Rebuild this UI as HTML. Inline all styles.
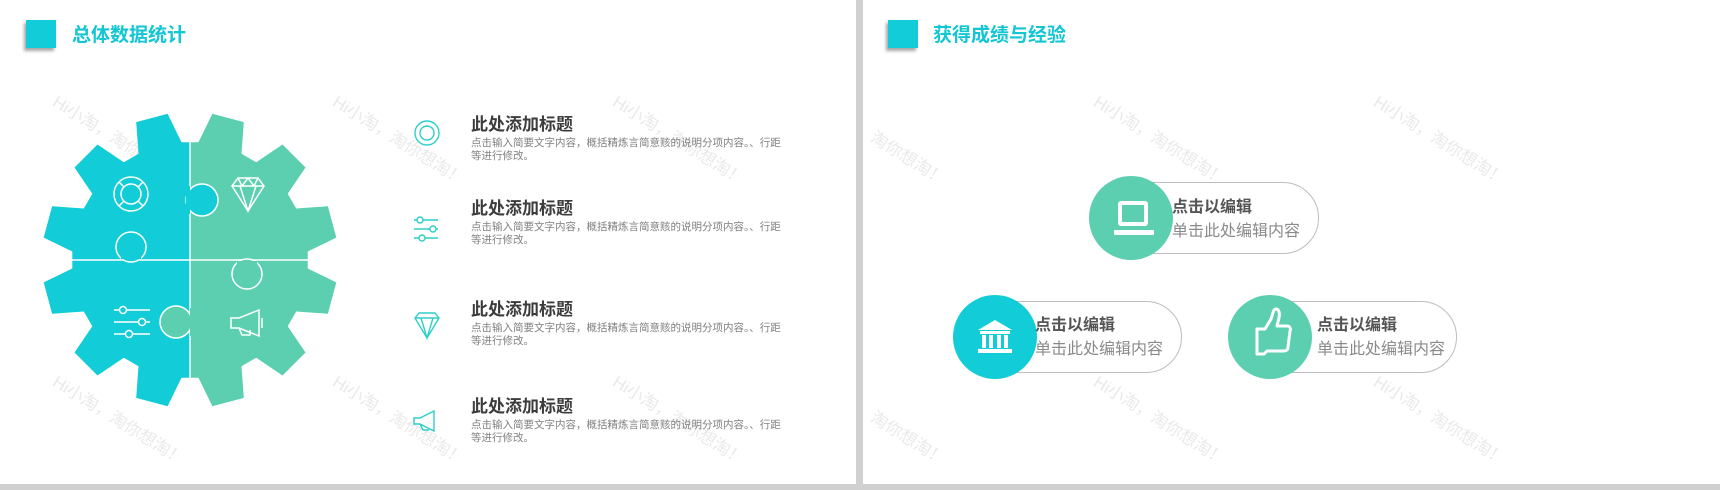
<!DOCTYPE html>
<html><head><meta charset="utf-8"><style>
*{margin:0;padding:0}
body{width:1720px;height:490px;background:#d0d0d0;position:relative;overflow:hidden;font-family:"Liberation Sans","Noto Sans CJK SC",sans-serif}
.slide{position:absolute;top:0;height:484px;background:#fff;overflow:hidden}
.sq{position:absolute;width:30px;height:28px;background:#12ccd8;box-shadow:-2px 3px 3px rgba(0,0,0,.35)}
.ttl{position:absolute;font-size:19px;font-weight:bold;color:#12c6d4;line-height:24px}
.wm{position:absolute;font-size:17px;color:rgba(0,0,0,.09);transform:rotate(32deg);transform-origin:0 0;white-space:nowrap}
.it{position:absolute;left:471px}
.it b{display:block;font-size:17px;color:#3c3c3c;line-height:20px}
.it p{font-size:10.5px;color:#808080;line-height:13px;width:312px;margin-top:2px}
.pill{position:absolute;height:70px;border:1.5px solid #bdbdbd;border-radius:36px;background:#fff}
.circ{position:absolute;width:84px;height:84px;border-radius:50%}
.pt{position:absolute;font-size:16px;line-height:24px}
.pt b{display:block;color:#555}
.pt span{color:#8a8a8a}
</style></head><body>
<div class="slide" style="left:0;width:856px">
<div class="sq" style="left:26px;top:20px"></div>
<div class="ttl" style="left:72px;top:24px">总体数据统计</div>
<div class="wm" style="left:62px;top:88px">Hi小淘，淘你想淘！</div>
<div class="wm" style="left:342px;top:88px">Hi小淘，淘你想淘！</div>
<div class="wm" style="left:62px;top:368px">Hi小淘，淘你想淘！</div>
<div class="wm" style="left:342px;top:368px">Hi小淘，淘你想淘！</div>
<div class="wm" style="left:622px;top:88px">Hi小淘，淘你想淘！</div>
<div class="wm" style="left:622px;top:368px">Hi小淘，淘你想淘！</div>
<svg width="856" height="484" style="position:absolute;left:0;top:0">
<defs>
<clipPath id="cl"><rect x="0" y="0" width="190" height="484"/></clipPath>
<clipPath id="cr"><rect x="190" y="0" width="400" height="484"/></clipPath>
</defs>
<path id="g1" fill="#12ccd8" clip-path="url(#cl)"/>
<path id="g2" fill="#5ccfb0" clip-path="url(#cr)"/>
<g stroke="#fff" stroke-width="1.5">
<line x1="190" y1="136" x2="190" y2="384"/>
<line x1="68" y1="260" x2="312" y2="260"/>
</g>
<circle cx="202" cy="200" r="16" fill="#12ccd8" stroke="#fff" stroke-width="1.5"/>
<rect x="186" y="186" width="4" height="28" fill="#12ccd8"/>
<circle cx="176" cy="322" r="16" fill="#5ccfb0" stroke="#fff" stroke-width="1.5"/>
<rect x="190" y="308" width="4" height="28" fill="#5ccfb0"/>
<circle cx="131" cy="247" r="15" fill="#12ccd8" stroke="#fff" stroke-width="1.5"/>
<rect x="121" y="256" width="20" height="3.2" fill="#12ccd8"/>
<circle cx="247" cy="274" r="15" fill="#5ccfb0" stroke="#fff" stroke-width="1.5"/>
<rect x="237" y="261" width="20" height="3.2" fill="#5ccfb0"/>
<g fill="none" stroke="#fff" stroke-width="1.5">
<circle cx="131" cy="194" r="17"/><circle cx="131" cy="194" r="10"/>
<path d="M124 187l-5-5M138 187l5-5M124 201l-5 5M138 201l5 5"/>
<path d="M232 186l6-8h20l6 8-16 25zM232 186h32M240 186l8 25 8-25M238 178l4 8 6-8 6 8 4-8"/>
<path d="M114 310h36M114 322h36M114 334h36"/>
<circle cx="123" cy="310" r="3.5" fill="#12ccd8"/><circle cx="142" cy="322" r="3.5" fill="#12ccd8"/><circle cx="129" cy="334" r="3.5" fill="#12ccd8"/>
<path d="M231 318h8l20-8v26l-20-8h-8zM239 328l3 7h8v-5M259 313v20M262 318v10"/>
</g>
<g fill="none" stroke="#2fcfc8" stroke-width="1.4">
<circle cx="427" cy="133" r="12"/><circle cx="427" cy="133" r="7"/>
<path d="M414 220h24M414 229h24M414 238h24"/>
<circle cx="420" cy="220" r="3" fill="#fff"/><circle cx="433" cy="229" r="3" fill="#fff"/><circle cx="422" cy="238" r="3" fill="#fff"/>
<path d="M415 318l4-5h16l4 5-12 20zM415 318h24M421 318l6 20 6-20"/>
<path d="M414 418h6l14-7v20l-14-7h-6zM420 424l3 6h6M434 413v16"/>
</g>
</svg>
<div class="it" style="top:115px"><b>此处添加标题</b><p>点击输入简要文字内容，概括精炼言简意赅的说明分项内容。、行距等进行修改。</p></div>
<div class="it" style="top:199px"><b>此处添加标题</b><p>点击输入简要文字内容，概括精炼言简意赅的说明分项内容。、行距等进行修改。</p></div>
<div class="it" style="top:300px"><b>此处添加标题</b><p>点击输入简要文字内容，概括精炼言简意赅的说明分项内容。、行距等进行修改。</p></div>
<div class="it" style="top:397px"><b>此处添加标题</b><p>点击输入简要文字内容，概括精炼言简意赅的说明分项内容。、行距等进行修改。</p></div>
</div>

<div class="slide" style="left:863px;width:857px">
<div class="sq" style="left:25px;top:20px"></div>
<div class="ttl" style="left:70px;top:24px">获得成绩与经验</div>
<div class="wm" style="left:-40px;top:88px">Hi小淘，淘你想淘！</div>
<div class="wm" style="left:240px;top:88px">Hi小淘，淘你想淘！</div>
<div class="wm" style="left:520px;top:88px">Hi小淘，淘你想淘！</div>
<div class="wm" style="left:-40px;top:368px">Hi小淘，淘你想淘！</div>
<div class="wm" style="left:240px;top:368px">Hi小淘，淘你想淘！</div>
<div class="wm" style="left:520px;top:368px">Hi小淘，淘你想淘！</div>
<div class="pill" style="left:230px;top:182px;width:224px"></div>
<div class="circ" style="left:226px;top:176px;background:#5ccfb0"></div>
<div class="pt" style="left:309px;top:196px"><b>点击以编辑</b><span>单击此处编辑内容</span></div>
<div class="pill" style="left:95px;top:301px;width:222px"></div>
<div class="circ" style="left:90px;top:295px;background:#12ccd8"></div>
<div class="pt" style="left:172px;top:314px"><b>点击以编辑</b><span>单击此处编辑内容</span></div>
<div class="pill" style="left:370px;top:301px;width:222px"></div>
<div class="circ" style="left:365px;top:295px;background:#5ccfb0"></div>
<div class="pt" style="left:454px;top:314px"><b>点击以编辑</b><span>单击此处编辑内容</span></div>
<svg width="857" height="484" style="position:absolute;left:0;top:0">
<g fill="#fff">
<rect x="255" y="201" width="30" height="25" rx="3"/>
<rect x="251" y="230" width="40" height="5" rx="1"/>
</g>
<rect x="259" y="205" width="22" height="17" fill="#5ccfb0"/>
<g fill="#fff">
<path d="M115 330l17-10 17 10z"/>
<rect x="117" y="331" width="30" height="3"/>
<rect x="119" y="335" width="4" height="13"/><rect x="126" y="335" width="4" height="13"/><rect x="134" y="335" width="4" height="13"/><rect x="141" y="335" width="4" height="13"/>
<rect x="115" y="349" width="34" height="4"/>
</g>
<path d="M394 329h8l6-10c2-5 2-10 5-10 3 0 4 4 3 9l-2 8h10c3 0 4 3 3 5l-2 16c0 3-2 4-4 4h-17l-3 3h-7z" fill="none" stroke="#fff" stroke-width="3" stroke-linejoin="round"/>
</svg>
</div>
<script>
function gear(cx,cy){var Ro=148,Ri=118,d="";for(var i=0;i<12;i++){var a=(i*30+15)*Math.PI/180;var pts=[[a-0.19,Ri],[a-0.11,Ro],[a+0.11,Ro],[a+0.19,Ri]];pts.forEach(function(p,j){var x=cx+p[1]*Math.sin(p[0]),y=cy-p[1]*Math.cos(p[0]);d+=(d?"L":"M")+x.toFixed(1)+" "+y.toFixed(1);});}return d+"Z";}
var d=gear(190,260);document.getElementById("g1").setAttribute("d",d);document.getElementById("g2").setAttribute("d",d);
</script>
</body></html>
